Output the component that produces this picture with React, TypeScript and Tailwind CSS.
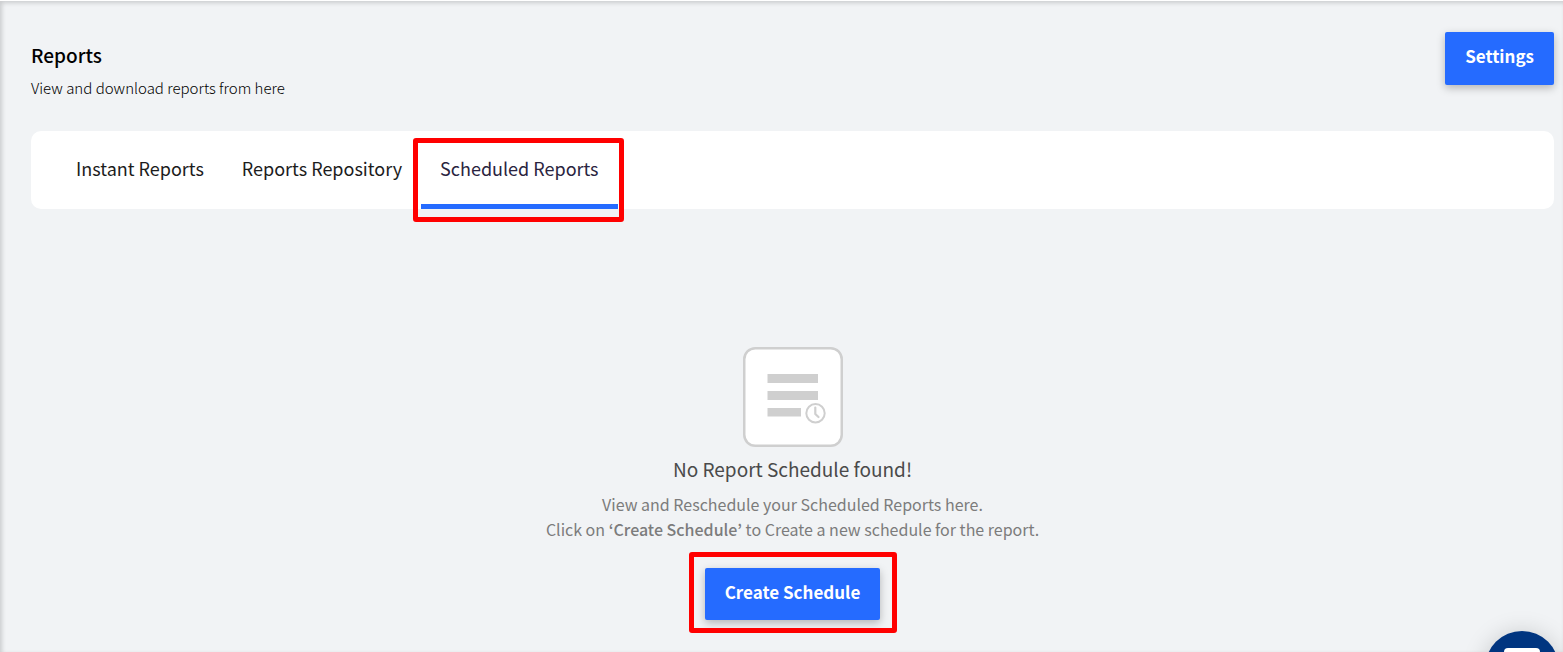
import { useState } from "react";

const tabs = ["Instant Reports", "Reports Repository", "Scheduled Reports"];

function Highlight({ className }: { className: string }) {
  return (
    <span
      aria-hidden="true"
      className={`pointer-events-none absolute rounded-[3px] border-[5px] border-[#ff0000] ${className}`}
    />
  );
}

function EmptyIcon() {
  return (
    <svg width="100" height="100" viewBox="0 0 100 100" fill="none" aria-hidden="true">
      <rect x="1.25" y="1.25" width="97.5" height="97.5" rx="11" fill="#fff" stroke="#cfcfcf" strokeWidth="2.5" />
      <path d="M24.5 27h50.500v9H24.500zM24.500 44h50.500v9H24.500zM24.500 61h33.500v8.500H24.500z" fill="#cfcfcf" />
      <circle cx="72.500" cy="66.200" r="9.200" fill="#fff" stroke="#cfcfcf" strokeWidth="2" />
      <path d="M72.300 60.500v6.500l3.200 3" stroke="#cfcfcf" strokeWidth="2.200" strokeLinecap="round" strokeLinejoin="round" />
    </svg>
  );
}

const buttonClass =
  "rounded-[2px] bg-[#256bff] px-5 pb-[5px] text-[17px] leading-[26px] font-bold text-white shadow-[0_3px_8px_rgba(0,0,0,0.26)]";

export default function App() {
  const [active, setActive] = useState("Scheduled Reports");

  return (
    <div className="relative min-h-screen overflow-hidden border-t border-white bg-[#f1f3f5] pt-[31px] pr-[9px] pl-[31px] font-['Noto_Sans_CJK_KR',sans-serif] shadow-[inset_2px_2px_4px_rgba(0,0,0,0.16)]">
      <header className="flex items-start justify-between">
        <div className="pt-[10px]">
          <h1 className="text-[19px] leading-[26px] font-medium text-black">Reports</h1>
          <p className="mt-2 text-[15px] leading-[24px] font-light text-black">View and download reports from here</p>
        </div>
        <button type="button" className={`${buttonClass} h-[53px]`}>
          Settings
        </button>
      </header>

      <nav className="mt-[31px] flex h-[78px] rounded-[10px] bg-white pl-[26px]">
        {tabs.map((tab) => (
          <button
            key={tab}
            type="button"
            onClick={() => setActive(tab)}
            className={`relative border-b-[5px] px-[19px] text-[18px] leading-[26px] ${
              active === tab ? "border-[#256bff] text-[#2a2440]" : "border-transparent text-[#1c1c1c]"
            }`}
          >
            {tab}
            {tab === "Scheduled Reports" && <Highlight className="top-[7px] -right-[6px] -bottom-[18px] -left-2" />}
          </button>
        ))}
      </nav>

      <main className="mt-[138px] flex flex-col items-center text-center">
        <EmptyIcon />
        <h2 className="mt-2 text-[19px] leading-[28px] text-[#4a4a4a]">No Report Schedule found!</h2>
        <p className="mt-[9px] text-[16px] leading-[25px] text-[#7c7c7c]">
          View and Reschedule your Scheduled Reports here.
          <br />
          Click on <span className="font-medium">‘Create Schedule’</span> to Create a new schedule for the report.
        </p>
        <div className="relative mt-[26px]">
          <button type="button" className={`${buttonClass} h-[52px]`}>
            Create Schedule
          </button>
          <Highlight className="-top-4 -right-[17px] -bottom-[13px] -left-4" />
        </div>
      </main>

      <button
        type="button"
        aria-label="Open chat"
        className="fixed right-[4px] -bottom-[53px] flex h-[74px] w-[74px] justify-center rounded-full bg-[#003580] pt-[17px] shadow-[0_2px_24px_rgba(0,0,0,0.18)]"
      >
        <svg width="36" height="30" viewBox="0 0 36 30" aria-hidden="true">
          <rect width="36" height="30" rx="4" fill="#fff" />
        </svg>
      </button>
    </div>
  );
}
